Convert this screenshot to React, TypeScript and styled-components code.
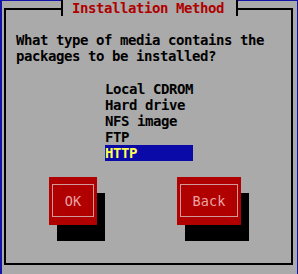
import React from "react";
import styled, { createGlobalStyle } from "styled-components";

const Global = createGlobalStyle`
  html, body { margin: 0; padding: 0; background: #aaaaaa; }
  * { box-sizing: border-box; }
`;

const FONT = `"DejaVu Sans Mono", "Liberation Mono", monospace`;

const Screen = styled.div`
  width: 298px;
  height: 274px;
  background: #aaaaaa;
  border-top: 1px solid #1414a8;
  border-left: 2px solid #1414a8;
  border-right: 1px solid #1414a8;
  padding: 7px 0 0 2px;
  font-family: ${FONT};
  font-size: 14px;
  line-height: 16px;
  letter-spacing: -0.43px;
`;

const Dialog = styled.div`
  position: relative;
  width: 289px;
  height: 257px;
  border: 2px solid #000;
  display: flex;
  flex-direction: column;
  align-items: flex-start;
`;

const Title = styled.div`
  position: absolute;
  top: -10px;
  left: 55px;
  height: 16px;
  padding: 0 12px 0 9px;
  border-left: 2px solid #000;
  border-right: 2px solid #000;
  background: #aaaaaa;
  color: #b00000;
  font-weight: bold;
  white-space: pre;
`;

const Question = styled.p`
  margin: 22px 0 0 10px;
  color: #000;
  font-weight: bold;
  white-space: pre;
`;

const List = styled.ul`
  list-style: none;
  margin: 17px 0 0 99px;
  padding: 0;
  width: 88px;
`;

const Item = styled.li<{ $selected?: boolean }>`
  height: 16px;
  padding-left: 0;
  font-weight: bold;
  white-space: pre;
  color: ${(p) => (p.$selected ? "#ffff55" : "#000")};
  background: ${(p) => (p.$selected ? "#0a0aa8" : "transparent")};
`;

const ButtonRow = styled.div`
  display: flex;
  gap: 80px;
  margin: 16px 0 0 43px;
`;

const Button = styled.div<{ $w: number }>`
  width: ${(p) => p.$w}px;
  height: 48px;
  background: #b00000;
  box-shadow: 8px 16px 0 0 #000;
  padding: 7px 3px 8px 3px;
  display: flex;
`;

const ButtonInner = styled.span`
  flex: 1;
  border: 1px solid #d09a9a;
  display: flex;
  align-items: center;
  justify-content: center;
  color: #eaa4a4;
  font-size: 13.5px;
  letter-spacing: 0.1px;
  padding-top: 1px;
`;

const items = ["Local CDROM", "Hard drive", "NFS image", "FTP", "HTTP"];

export default function App() {
  return (
    <>
      <Global />
      <Screen>
        <Dialog>
          <Title>Installation Method</Title>
          <Question>{"What type of media contains the\npackages to be installed?"}</Question>
          <List>
            {items.map((it) => (
              <Item key={it} $selected={it === "HTTP"}>
                {it}
              </Item>
            ))}
          </List>
          <ButtonRow>
            <Button $w={48}>
              <ButtonInner>OK</ButtonInner>
            </Button>
            <Button $w={64}>
              <ButtonInner>Back</ButtonInner>
            </Button>
          </ButtonRow>
        </Dialog>
      </Screen>
    </>
  );
}
